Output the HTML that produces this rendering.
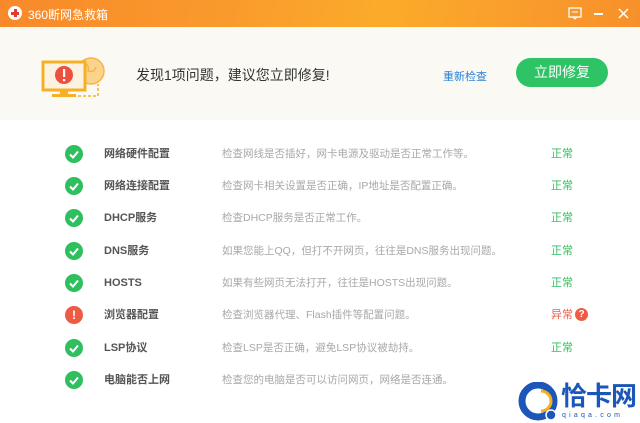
<!DOCTYPE html>
<html><head><meta charset="utf-8"><style>
*{margin:0;padding:0;box-sizing:border-box}
body{width:640px;height:423px;overflow:hidden;background:#fff;font-family:"Liberation Sans","Noto Sans CJK SC",sans-serif;position:relative}
.tb{position:absolute;left:0;top:0;width:640px;height:27px;background:linear-gradient(100deg,#f8892a 0%,#f99a2c 35%,#fbab2a 60%,#f99a2c 85%,#f7902a 100%)}
.tb .t{position:absolute;left:28px;top:6px;color:#fff;font-size:12px}
.tb .ic{position:absolute;left:8px;top:6px;width:14px;height:14px;border-radius:50%;background:#fff}
.tb .ic:before{content:"";position:absolute;left:6px;top:3px;width:3px;height:8px;background:#e53a2e}
.tb .ic:after{content:"";position:absolute;left:3px;top:6px;width:8px;height:3px;background:#e53a2e}
.hd{position:absolute;left:0;top:27px;width:640px;height:93px;background:#faf9f3}
.row{position:absolute;left:0;height:20px;width:640px;font-size:11px;line-height:20px}
.ok{position:absolute;left:65px;top:1px;width:18px;height:18px;border-radius:50%;background:#2fbf5e}
.bad{position:absolute;left:65px;top:1px;width:18px;height:18px;border-radius:50%;background:#ee5b45;color:#fff;font-weight:bold;text-align:center;line-height:18px;font-size:12px}
.n{position:absolute;left:104px;top:0;color:#555;font-size:11px;font-weight:bold;line-height:20px}
.d{position:absolute;left:222px;top:0;color:#a8a8a8;font-size:10.5px;line-height:20px}
.s{position:absolute;left:551px;top:0;color:#2fbf5e;font-size:11px;line-height:20px}
</style></head><body>
<div class="tb"><div class="ic"></div><div class="t">360断网急救箱</div>
<svg style="position:absolute;left:568px;top:7px" width="14" height="13"><rect x="1" y="1" width="12" height="9" fill="none" stroke="#fff" stroke-width="1.3"/><path d="M5 10 L7 12 L9 10" fill="none" stroke="#fff"/><line x1="4" y1="5" x2="10" y2="5" stroke="#fff"/></svg>
<div style="position:absolute;left:594px;top:13px;width:9px;height:1.5px;background:#fff"></div>
<svg style="position:absolute;left:618px;top:8px" width="11" height="11"><path d="M1 1L10 10M10 1L1 10" stroke="#fff" stroke-width="1.5"/></svg>
</div>
<div class="hd">
<svg style="position:absolute;left:38px;top:22px" width="70" height="56">
<circle cx="53" cy="22" r="13" fill="#fbd38a" stroke="#f5b54a" stroke-width="1.5"/>
<path d="M46 14 q6 2 4 8 q6 2 8 -4" fill="none" stroke="#f5b54a" stroke-width="1.5"/>
<rect x="5" y="13" width="42" height="28" fill="#fdf2df" stroke="#f5b027" stroke-width="3"/>
<circle cx="26" cy="26" r="9" fill="#ee5040"/>
<rect x="25" y="20" width="2.2" height="8" fill="#fff"/><rect x="25" y="30" width="2.2" height="2.2" fill="#fff"/>
<rect x="22" y="42" width="8" height="4" fill="#f5b027"/><rect x="14" y="45" width="24" height="3" fill="#f5b027"/>
<path d="M40 47 h20 v-12" fill="none" stroke="#f5b027" stroke-width="1.5" stroke-dasharray="3 2"/>
</svg>
<div style="position:absolute;left:136px;top:38px;font-size:14px;color:#333">发现1项问题，建议您立即修复!</div>
<div style="position:absolute;left:443px;top:41px;font-size:11px;color:#2a83d8">重新检查</div>
<div style="position:absolute;left:516px;top:31px;width:92px;height:29px;border-radius:15px;background:#2ec365;color:#fff;font-size:14px;text-align:center;line-height:29px">立即修复</div>
</div>

<div class="row" style="top:144px"><div class="ok"><svg width="18" height="18"><path d="M5 9.5l3 3 5-6" fill="none" stroke="#fff" stroke-width="2"/></svg></div><div class="n">网络硬件配置</div><div class="d">检查网线是否插好，网卡电源及驱动是否正常工作等。</div><div class="s">正常</div></div>
<div class="row" style="top:176px"><div class="ok"><svg width="18" height="18"><path d="M5 9.5l3 3 5-6" fill="none" stroke="#fff" stroke-width="2"/></svg></div><div class="n">网络连接配置</div><div class="d">检查网卡相关设置是否正确，IP地址是否配置正确。</div><div class="s">正常</div></div>
<div class="row" style="top:208px"><div class="ok"><svg width="18" height="18"><path d="M5 9.5l3 3 5-6" fill="none" stroke="#fff" stroke-width="2"/></svg></div><div class="n">DHCP服务</div><div class="d">检查DHCP服务是否正常工作。</div><div class="s">正常</div></div>
<div class="row" style="top:241px"><div class="ok"><svg width="18" height="18"><path d="M5 9.5l3 3 5-6" fill="none" stroke="#fff" stroke-width="2"/></svg></div><div class="n">DNS服务</div><div class="d">如果您能上QQ，但打不开网页，往往是DNS服务出现问题。</div><div class="s">正常</div></div>
<div class="row" style="top:273px"><div class="ok"><svg width="18" height="18"><path d="M5 9.5l3 3 5-6" fill="none" stroke="#fff" stroke-width="2"/></svg></div><div class="n">HOSTS</div><div class="d">如果有些网页无法打开，往往是HOSTS出现问题。</div><div class="s">正常</div></div>
<div class="row" style="top:305px"><div class="bad">!</div><div class="n">浏览器配置</div><div class="d">检查浏览器代理、Flash插件等配置问题。</div><div class="s" style="color:#ee5b45">异常</div><div style="position:absolute;left:575px;top:3px;width:13px;height:13px;border-radius:50%;background:#ee5b45;color:#fff;font-size:10px;font-weight:bold;text-align:center;line-height:13px">?</div></div>
<div class="row" style="top:338px"><div class="ok"><svg width="18" height="18"><path d="M5 9.5l3 3 5-6" fill="none" stroke="#fff" stroke-width="2"/></svg></div><div class="n">LSP协议</div><div class="d">检查LSP是否正确，避免LSP协议被劫持。</div><div class="s">正常</div></div>
<div class="row" style="top:370px"><div class="ok"><svg width="18" height="18"><path d="M5 9.5l3 3 5-6" fill="none" stroke="#fff" stroke-width="2"/></svg></div><div class="n">电脑能否上网</div><div class="d">检查您的电脑是否可以访问网页，网络是否连通。</div><div class="s" style="top:6px">正常</div></div>

<div style="position:absolute;left:514px;top:378px;width:126px;height:45px;background:#fff"></div>
<svg style="position:absolute;left:518px;top:382px" width="42" height="40">
<circle cx="20" cy="19" r="16" fill="none" stroke="#1b56b8" stroke-width="7"/>
<path d="M23 9 a10 10 0 0 1 0 20" fill="none" stroke="#f5b01f" stroke-width="3"/>
<circle cx="33" cy="33" r="5" fill="#1b56b8" stroke="#fff" stroke-width="1.5"/>
</svg>
<div style="position:absolute;left:561px;top:381px;font-size:26px;font-weight:bold;color:#1b56b8;letter-spacing:-1px;line-height:30px">恰卡网</div>
<div style="position:absolute;left:562px;top:412px;font-size:7px;color:#1b56b8;letter-spacing:3.2px">qiaqa.com</div>
</body></html>
